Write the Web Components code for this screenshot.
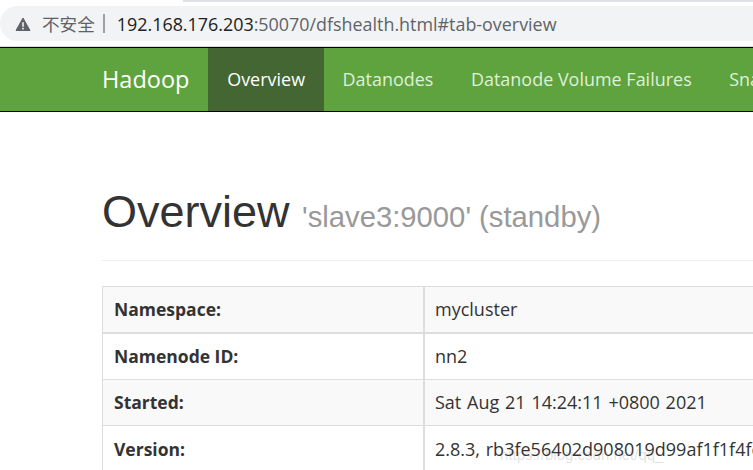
<!DOCTYPE html>
<html>
<head>
<meta charset="utf-8">
<style>
  html, body { margin: 0; padding: 0; background: #fff; overflow: hidden; height: 470px; }
  body { font-family: "Open Sans", "Noto Sans CJK SC", sans-serif; }
</style>
</head>
<body>
<address-bar></address-bar>
<hadoop-nav></hadoop-nav>
<page-header></page-header>
<info-table>
  <info-row label="Namespace:" value="mycluster" shade></info-row>
  <info-row label="Namenode ID:" value="nn2"></info-row>
  <info-row label="Started:" value="Sat Aug 21 14:24:11 +0800 2021" shade></info-row>
  <info-row label="Version:" value="2.8.3, rb3fe56402d908019d99af1f1f4fc"></info-row>
</info-table>

<script>
// browser address bar above the page
class AddressBar extends HTMLElement {
  constructor() {
    super();
    this.attachShadow({ mode: 'open' });
  }
  connectedCallback() {
    this.shadowRoot.innerHTML = `
      <style>
        :host { display: block; height: 47px; box-sizing: border-box; padding-top: 6px; border-bottom: 1px solid #dcdcdc; }
        .tabline { position: absolute; top: 0; left: 183px; right: 0; height: 2px; background: #dee1e6; }
        .box {
          height: 35px;
          background: #f1f3f4;
          border-radius: 18px 0 0 18px;
          display: flex;
          align-items: center;
          padding-left: 15px;
          font: 17.9px "Open Sans", "Noto Sans CJK SC", sans-serif;
          color: #5f6368;
          white-space: nowrap;
        }
        svg { width: 16px; height: 16px; flex: none; margin-right: 11px; }
        .warn { font-family: "Noto Sans CJK SC", sans-serif; font-size: 17.6px; }
        .sep { width: 2px; height: 19px; background: #9aa0a6; margin: 0 12px 0 8px; }
        .host { color: #202124; }
      </style>
      <div class="tabline"></div>
      <div class="box">
        <svg viewBox="0 0 16 16"><path fill="#5f6368" stroke="#5f6368" stroke-linejoin="round" d="M8 2 15 14.5H1z"/><path fill="#f1f3f4" d="M7.2 6.2h1.6v4.6H7.2zM7.2 11.8h1.6v1.6H7.2z"/></svg>
        <span class="warn">不安全</span><span class="sep"></span>
        <span><span class="host">192.168.176.203</span>:50070/dfshealth.html#tab-overview</span>
      </div>
    `;
  }
}

// green bootstrap navbar
class HadoopNav extends HTMLElement {
  constructor() {
    super();
    this.attachShadow({ mode: 'open' });
  }
  connectedCallback() {
    this.shadowRoot.innerHTML = `
      <style>
        :host {
          display: flex;
          height: 63px;
          background: #5fa33e;
          border-top: 1px solid #000;
          border-bottom: 1px solid #000;
          padding-left: 102px;
          font: 17.9px "Open Sans", sans-serif;
          letter-spacing: .04px;
          white-space: nowrap;
          overflow: hidden;
        }
        .brand { font-size: 23.5px; letter-spacing: 0; color: #fff; line-height: 62px; margin-right: 19px; }
        a { display: block; padding: 0 18.75px; line-height: 62px; color: #dff0d8; text-decoration: none; flex: none; }
        a.active { background: #446633; color: #fff; }
      </style>
      <span class="brand">Hadoop</span>
      <a class="active" href="#">Overview</a>
      <a href="#">Datanodes</a>
      <a href="#">Datanode Volume Failures</a>
      <a href="#">Snapshot</a>
    `;
  }
}

// big heading with the small host name
class PageHeader extends HTMLElement {
  constructor() {
    super();
    this.attachShadow({ mode: 'open' });
  }
  connectedCallback() {
    this.shadowRoot.innerHTML = `
      <style>
        :host {
          display: block;
          margin: 0 0 25px 102px;
          padding: 76px 0 19px;
          border-bottom: 1px solid #eee;
          font-family: "Liberation Sans", sans-serif;
          white-space: nowrap;
        }
        h1 { margin: 0; font-size: 45px; font-weight: 400; line-height: 48px; color: #333; }
        small { font-size: 29.25px; color: #999; }
      </style>
      <h1>Overview <small>'slave3:9000' (standby)</small></h1>
    `;
  }
}

class InfoTable extends HTMLElement {
  constructor() {
    super();
    this.attachShadow({ mode: 'open' });
  }
  connectedCallback() {
    this.shadowRoot.innerHTML = `
      <style>
        :host { display: block; position: relative; margin-left: 102px; border-left: 1px solid #ddd; border-top: 1px solid #ddd; }
        /* faint image watermark lying over the last row */
        .mark { position: absolute; left: 397px; top: 159px; font: 15px "Liberation Sans", sans-serif; color: rgba(120,120,120,.22); white-space: nowrap; }
      </style>
      <slot></slot>
      <div class="mark">https://blog.csdn.net/qq_</div>
    `;
  }
}

class InfoRow extends HTMLElement {
  constructor() {
    super();
    this.attachShadow({ mode: 'open' });
  }
  connectedCallback() {
    this.shadowRoot.innerHTML = `
      <style>
        :host {
          display: grid;
          grid-template-columns: 322px 1fr;
          box-sizing: border-box;
          height: 46px;
          border-bottom: 1px solid #ddd;
          font: 18px "Open Sans", sans-serif;
          color: #333;
          white-space: nowrap;
          line-height: 45px;
        }
        :host(:first-child) { height: 47px; border-bottom-width: 2px; }
        :host(:last-child) { line-height: 46px; }
        :host([shade]) { background: #f9f9f9; }
        .k { font-weight: 700; font-size: 17.5px; padding-left: 11px; border-right: 2px solid #ddd; }
        .v { padding-left: 10px; overflow: hidden; word-spacing: 1.1px; }
      </style>
      <div class="k">${this.getAttribute('label')}</div>
      <div class="v">${this.getAttribute('value')}</div>
    `;
  }
}

customElements.define('address-bar', AddressBar);
customElements.define('hadoop-nav', HadoopNav);
customElements.define('page-header', PageHeader);
customElements.define('info-table', InfoTable);
customElements.define('info-row', InfoRow);
</script>
</body>
</html>
